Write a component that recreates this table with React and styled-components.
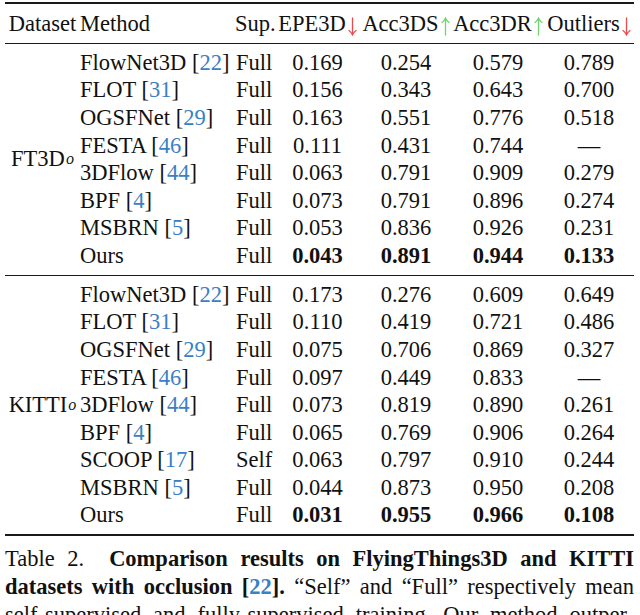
import React from 'react'
import styled, { createGlobalStyle } from 'styled-components'

const GlobalStyle = createGlobalStyle`
  html, body {
    margin: 0;
    padding: 0;
    background: #fff;
  }
  body {
    font-family: "Liberation Serif", "Times New Roman", serif;
    color: #111;
    overflow: hidden;
  }
`

const ft3dRows = [
  { method: 'FlowNet3D', cite: '22', sup: 'Full', vals: ['0.169', '0.254', '0.579', '0.789'] },
  { method: 'FLOT', cite: '31', sup: 'Full', vals: ['0.156', '0.343', '0.643', '0.700'] },
  { method: 'OGSFNet', cite: '29', sup: 'Full', vals: ['0.163', '0.551', '0.776', '0.518'] },
  { method: 'FESTA', cite: '46', sup: 'Full', vals: ['0.111', '0.431', '0.744', '—'] },
  { method: '3DFlow', cite: '44', sup: 'Full', vals: ['0.063', '0.791', '0.909', '0.279'] },
  { method: 'BPF', cite: '4', sup: 'Full', vals: ['0.073', '0.791', '0.896', '0.274'] },
  { method: 'MSBRN', cite: '5', sup: 'Full', vals: ['0.053', '0.836', '0.926', '0.231'] },
  { method: 'Ours', sup: 'Full', best: true, vals: ['0.043', '0.891', '0.944', '0.133'] },
]

const kittiRows = [
  { method: 'FlowNet3D', cite: '22', sup: 'Full', vals: ['0.173', '0.276', '0.609', '0.649'] },
  { method: 'FLOT', cite: '31', sup: 'Full', vals: ['0.110', '0.419', '0.721', '0.486'] },
  { method: 'OGSFNet', cite: '29', sup: 'Full', vals: ['0.075', '0.706', '0.869', '0.327'] },
  { method: 'FESTA', cite: '46', sup: 'Full', vals: ['0.097', '0.449', '0.833', '—'] },
  { method: '3DFlow', cite: '44', sup: 'Full', vals: ['0.073', '0.819', '0.890', '0.261'] },
  { method: 'BPF', cite: '4', sup: 'Full', vals: ['0.065', '0.769', '0.906', '0.264'] },
  { method: 'SCOOP', cite: '17', sup: 'Self', vals: ['0.063', '0.797', '0.910', '0.244'] },
  { method: 'MSBRN', cite: '5', sup: 'Full', vals: ['0.044', '0.873', '0.950', '0.208'] },
  { method: 'Ours', sup: 'Full', best: true, vals: ['0.031', '0.955', '0.966', '0.108'] },
]

const metrics = [
  { name: 'EPE3D', dir: 'down' },
  { name: 'Acc3DS', dir: 'up' },
  { name: 'Acc3DR', dir: 'up' },
  { name: 'Outliers', dir: 'down' },
]

// thin LaTeX-style \uparrow / \downarrow
const Arrow = ({ dir }) => {
  const color = dir === 'up' ? '#6fd36f' : '#ec4b4b'
  return (
    <ArrowSvg width="9" height="19" viewBox="0 0 9 19">
      {dir === 'up' ? (
        <g fill="none" stroke={color} strokeWidth="1.3" strokeLinecap="round">
          <path d="M4.5 1.5 V18" />
          <path d="M1 5.5 Q3.2 4 4.5 1.2 Q5.8 4 8 5.5" />
        </g>
      ) : (
        <g fill="none" stroke={color} strokeWidth="1.3" strokeLinecap="round">
          <path d="M4.5 1 V17.5" />
          <path d="M1 13.5 Q3.2 15 4.5 17.8 Q5.8 15 8 13.5" />
        </g>
      )}
    </ArrowSvg>
  )
}

const Section = ({ name, rows }) => (
  <SectionBody>
    <DatasetCell>
      {name}<Sub>o</Sub>
    </DatasetCell>
    <RowList>
      {rows.map((r) => (
        <DataRow key={r.method}>
          <MethodCell>
            {r.method}
            {r.cite && (
              <> [<Cite>{r.cite}</Cite>]</>
            )}
          </MethodCell>
          <SupCell>{r.sup}</SupCell>
          {r.vals.map((v, i) => (
            <NumCell key={i} $bold={r.best}>{v}</NumCell>
          ))}
        </DataRow>
      ))}
    </RowList>
  </SectionBody>
)

const App = () => {
  return (
    <Page>
      <GlobalStyle />
      <TableWrap>
        <Rule $thick />
        <HeaderRow>
          <HeadDataset>Dataset</HeadDataset>
          <HeadMethod>Method</HeadMethod>
          <HeadSup>Sup.</HeadSup>
          {metrics.map((m) => (
            <HeadMetric key={m.name}>
              {m.name}
              <Arrow dir={m.dir} />
            </HeadMetric>
          ))}
        </HeaderRow>
        <Rule />
        <Section name="FT3D" rows={ft3dRows} />
        <Rule />
        <Section name="KITTI" rows={kittiRows} />
        <Rule $thick />
        <Caption>
          <CaptionLine>
            Table 2.&nbsp; <b>Comparison results on FlyingThings3D and KITTI</b>
          </CaptionLine>
          <CaptionLine>
            <b>datasets with occlusion [<Cite>22</Cite>].</b> “Self” and “Full” respectively mean
          </CaptionLine>
          <CaptionLine>
            self-supervised and fully-supervised training. Our method outper-
          </CaptionLine>
        </Caption>
      </TableWrap>
    </Page>
  )
}

const Page = styled.div`
  width: 640px;
  height: 615px;
  overflow: hidden;
  background: #fff;
`

const TableWrap = styled.div`
  margin-left: 5px;
  width: 629px;
  padding-top: 2px;
  font-size: 22.5px;
`

const Rule = styled.div`
  height: ${(p) => (p.$thick ? '2px' : '1.2px')};
  background: #1a1a1a;
`

const columns = '75px 155px 40px 85px 92px 92px 90px'
const rowColumns = '155px 40px 85px 92px 92px 90px'

const HeaderRow = styled.div`
  display: grid;
  grid-template-columns: ${columns};
  align-items: center;
  height: 27.6px;
  padding: 5.5px 0;
  line-height: 27.6px;
  white-space: nowrap;
`

const HeadDataset = styled.div`
  text-align: center;
`

const HeadMethod = styled.div`
  text-align: left;
`

const HeadSup = styled.div`
  text-align: left;
`

const HeadMetric = styled.div`
  text-align: center;
`

const ArrowSvg = styled.svg`
  display: inline-block;
  margin-left: 2px;
  vertical-align: -5px;
`

const SectionBody = styled.div`
  display: flex;
  padding: 5px 0;
`

const DatasetCell = styled.div`
  width: 75px;
  flex: none;
  display: flex;
  align-items: center;
  justify-content: center;
  white-space: nowrap;
`

const Sub = styled.sub`
  font-style: italic;
  font-size: 16px;
  vertical-align: -5px;
  line-height: 0;
  margin-left: 1px;
`

const RowList = styled.div`
  display: flex;
  flex-direction: column;
`

const DataRow = styled.div`
  display: grid;
  grid-template-columns: ${rowColumns};
  height: 27.6px;
  line-height: 27.6px;
  white-space: nowrap;
`

const MethodCell = styled.div`
  text-align: left;
`

const Cite = styled.span`
  color: #3a80c4;
`

const SupCell = styled.div`
  text-align: left;
  padding-left: 1px;
`

const NumCell = styled.div`
  text-align: center;
  font-weight: ${(p) => (p.$bold ? 700 : 400)};
`

const Caption = styled.div`
  margin-top: 9px;
  line-height: 28px;
`

const CaptionLine = styled.div`
  text-align: justify;
  text-align-last: justify;
  white-space: nowrap;
`

export default App
